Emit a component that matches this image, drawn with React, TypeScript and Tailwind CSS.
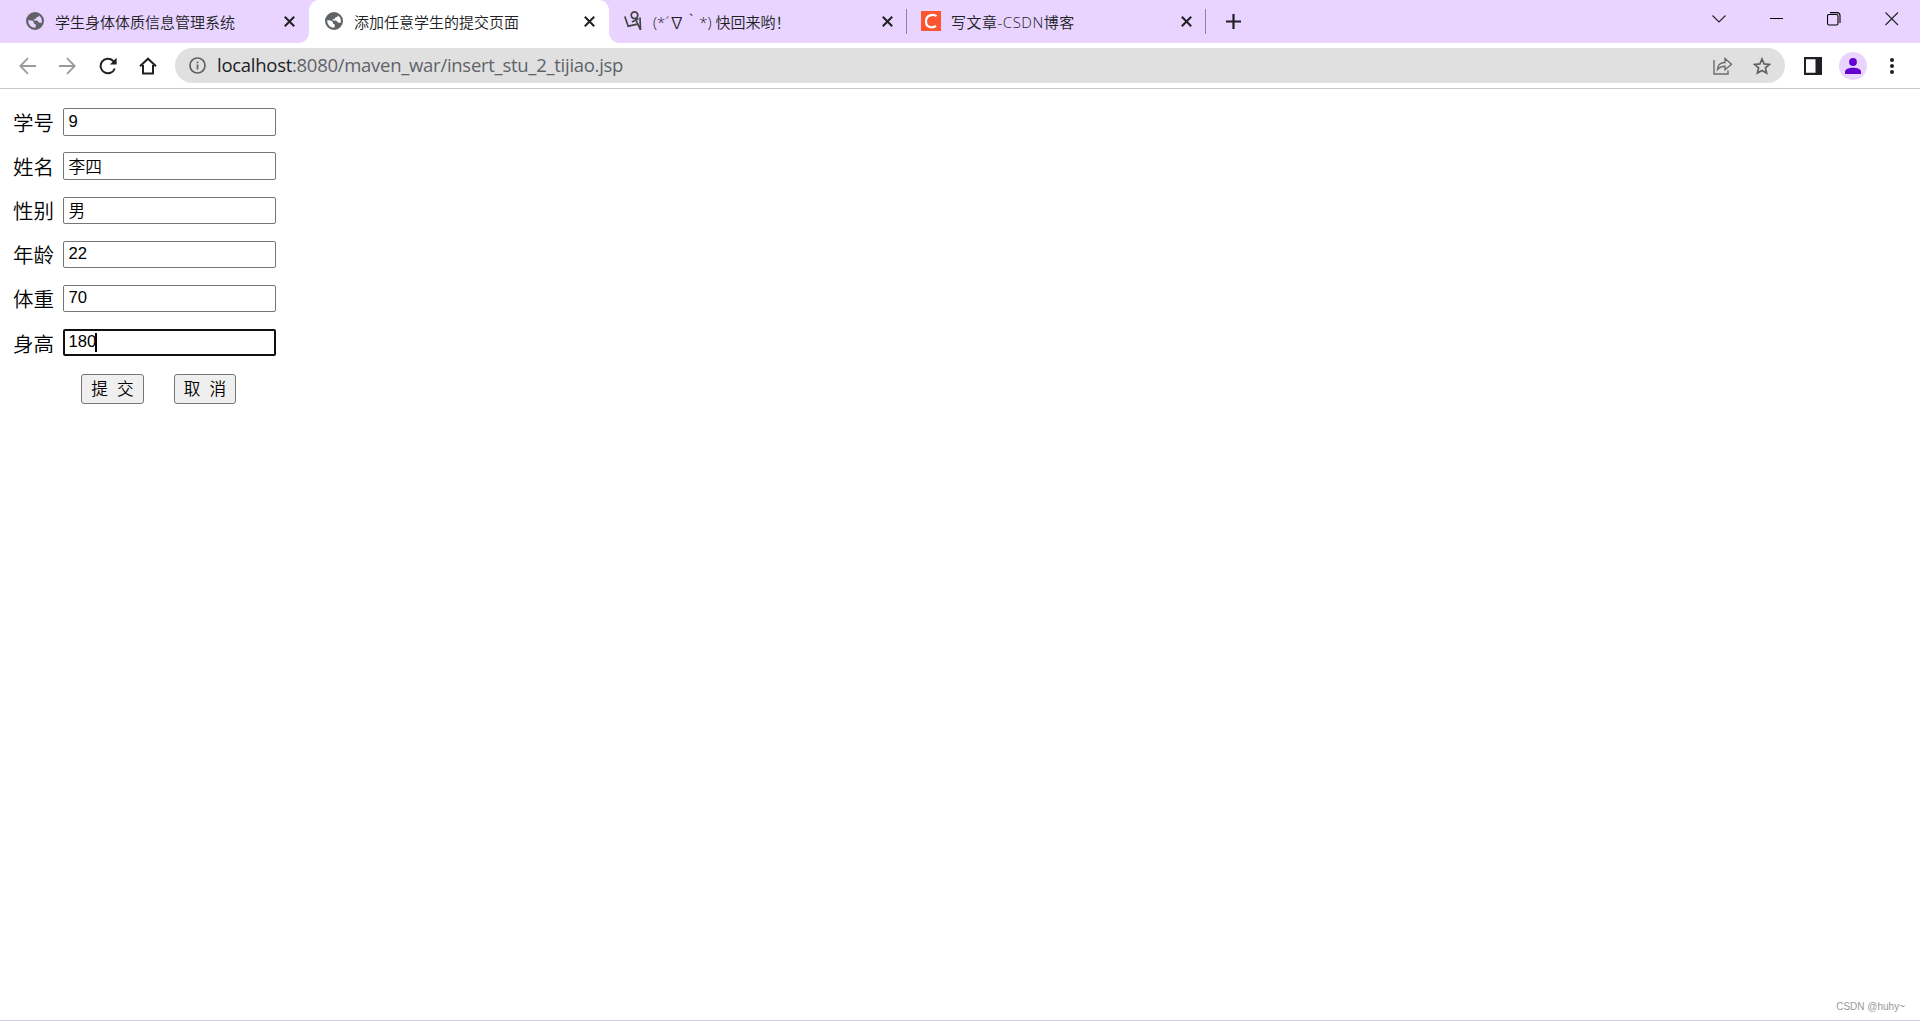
import React from 'react'
import clsx from 'clsx';

const tabs = [
  { title: "学生身体体质信息管理系统", icon: "globe", active: false, divider: false, width: "w-[299px]", text: "" },
  { title: "添加任意学生的提交页面", icon: "globe", active: true, divider: false, width: "w-[300px]", text: "" },
  { title: "(*´∇｀*) 快回来哟！", icon: "doodle", active: false, divider: true, width: "w-[298px]", text: "-ml-px" },
  { title: "写文章-CSDN博客", icon: "csdn", active: false, divider: true, width: "w-[299px]", text: "-ml-px tracking-[0.5px]" },
];

const fields = [
  { label: "学号", value: "9", cjk: false, row: "h-11", box: "h-7" },
  { label: "姓名", value: "李四", cjk: true, row: "h-[45px]", box: "h-7" },
  { label: "性别", value: "男", cjk: true, row: "h-11", box: "h-[27px]", raised: true },
  { label: "年龄", value: "22", cjk: false, row: "h-11", box: "h-[27px]", raised: true },
  { label: "体重", value: "70", cjk: false, row: "h-11", box: "h-[27px]", raised: true },
  { label: "身高", value: "180", cjk: false, row: "h-[45px]", box: "h-[27px]", focused: true },
];

const GlobeIcon = () => (
  <svg width="18" height="18" viewBox="0 0 18 18">
    <path
      fill="#5f6368"
      fillRule="evenodd"
      d="M9 0a9 9 0 1 0 0 18A9 9 0 0 0 9 0ZM8 2.200C10.500 2 12 2.600 13 3.500c.2 1.300-1.400 1.200-2.300 1.700-.9.500-.5 1.400-1.500 1.900-.8.4-1.700.2-1.800 1 .4.700 1.800.4 3 .5 1.700.1 1.600 2.100 3.300 2.200h2.100c.5-3.500-.7-6-2.800-7.300C11.500 2.300 10 2.100 8 2.200ZM2.200 8.300c2 0 4.800.1 5.400 1.500.5 1.200-.1 1.800 1.400 2.300 1 .3 1 1.600.4 3.700A6.900 6.900 0 0 1 2.200 8.300Z"
    />
  </svg>
);

const DoodleIcon = () => (
  <svg width="18" height="20" viewBox="0 0 18 20" fill="none" stroke="#444" strokeWidth="1.700">
    <path d="M.8 5.500 4.200 15.200 13.500 13.200M8 11 14.500 7.500M11.500 8 16.500 19M16 6.500l.5 12.500" />
    <circle cx="10.500" cy="4.200" r="3.300" />
  </svg>
);

const CsdnIcon = () => (
  <svg width="20" height="20" viewBox="0 0 20 20" fill="none">
    <path d="M0 0h20v20H0Z" fill="#fc5531" />
    <path d="M15.500 5.200C12.500 2.800 5 3.600 5 10.500c0 6.300 6.500 6.800 10 4.500" stroke="#fff" strokeWidth="2.200" />
  </svg>
);

const CloseIcon = () => (
  <svg width="11" height="11" viewBox="0 0 11 11" stroke="#1f2023" strokeWidth="2">
    <path d="m.8.8 9.400 9.400M10.200.8.8 10.200" />
  </svg>
);

const TabIcon: React.FC<{ name: string }> = ({ name }) => {
  if (name === "globe") return <GlobeIcon />;
  if (name === "doodle") return <DoodleIcon />;
  return <CsdnIcon />;
};

const TabStrip = () => (
  <div className="relative flex h-[43px] shrink-0 bg-[#e8d4ff] pl-2.5">
    {tabs.map((tab) => (
      <div
        key={tab.title}
        className={clsx(
          'relative flex h-full shrink-0 items-center pb-[1px]',
          tab.width,
          tab.active && 'z-10 rounded-t-[10px] bg-white before:absolute before:bottom-0 before:-left-2.5 before:size-2.5 before:bg-[radial-gradient(circle_at_0_0,transparent_9.5px,white_10px)] after:absolute after:bottom-0 after:-right-2.5 after:size-2.5 after:bg-[radial-gradient(circle_at_100%_0,transparent_9.5px,white_10px)]'
        )}
      >
        <span className={clsx('ml-3.5 flex w-5', tab.icon === "globe" ? 'justify-end' : 'justify-center')}>
          <TabIcon name={tab.icon} />
        </span>
        <span className="ml-[11px] flex-1 pt-0.5 text-[15px] whitespace-nowrap text-[#202124]">
          <span className={tab.text}>{tab.title}</span>
        </span>
        <span className="mr-3.5"><CloseIcon /></span>
        {tab.divider && <span className="absolute top-[9px] right-0 h-[25px] w-px bg-[#8f8399]" />}
      </div>
    ))}
    <svg className="mt-3.5 ml-5" width="15" height="15" viewBox="0 0 15 15" stroke="#1f2023" strokeWidth="2.200">
      <path d="M7.500 0v15M0 7.500h15" />
    </svg>
    <div className="mt-3 ml-auto flex pr-[21px]">
      <svg width="14" height="14" viewBox="0 0 14 14" fill="none" stroke="#222" strokeWidth="1.100"><path d="m.5 3.500 6.500 6.500 6.500-6.500" /></svg>
      <svg className="ml-11" width="14" height="14" viewBox="0 0 14 14" stroke="#000"><path d="M0 6.500h13" /></svg>
      <svg className="ml-[43px]" width="14" height="14" viewBox="0 0 14 14" fill="none" stroke="#000" strokeWidth="1.100"><rect x=".5" y="2.500" width="10.500" height="10.500" rx="1.500" /><path d="M3 .6h7a3 3 0 0 1 3 3V11" /></svg>
      <svg className="ml-11" width="14" height="14" viewBox="0 0 14 14" stroke="#222" strokeWidth="1.100"><path d="m.5.5 12.500 12.500M13 .5.5 13" /></svg>
    </div>
  </div>
);

const Toolbar = () => (
  <div className="flex h-[46px] shrink-0 items-center border-b border-[#c8c8c8]">
    <svg className="ml-[19px]" width="17" height="18" viewBox="0 0 17 18" fill="none" stroke="#9a9a9a" strokeWidth="1.800"><path d="M17 9H1.500M9 1.200 1.300 9 9 16.800" /></svg>
    <svg className="ml-[23px]" width="17" height="18" viewBox="0 0 17 18" fill="none" stroke="#9a9a9a" strokeWidth="1.800"><path d="M0 9h15.500M8 1.200 15.700 9 8 16.800" /></svg>
    <svg className="ml-[23px]" width="18" height="18" viewBox="0 0 18 18" fill="none" stroke="#1f2023" strokeWidth="2"><path d="M15.800 11.500A7.300 7.300 0 1 1 14 3.700l1.500 1.500" /><path d="M17.600.8v6.700h-6.700Z" fill="#1f2023" stroke="none" /></svg>
    <svg className="ml-[22px]" width="18" height="18" viewBox="0 0 18 18" fill="none" stroke="#1f2023" strokeWidth="2"><path d="M1 9.200 9 1.700l8 7.500M4 8v8.500h10V8" /></svg>
    <div className="ml-[18px] flex h-[35px] w-[1610px] items-center rounded-full bg-[#e0e0e0] pr-3.5 pl-3.5">
      <svg width="17" height="17" viewBox="0 0 17 17" fill="none" stroke="#5f6368" strokeWidth="1.700"><circle cx="8.500" cy="8.500" r="7.500" /><path d="M8.500 7.500v5M8.500 4.500v1.700" /></svg>
      <span className="ml-[11px] pb-0.5 font-['Open_Sans',sans-serif] text-[18.5px] font-normal tracking-[-0.28px] whitespace-nowrap text-[#5f6368]">
        <span className="text-[#202124]">localhost</span>:8080/maven_war/insert_stu_2_tijiao.jsp
      </span>
      <svg className="ml-auto" width="20" height="18" viewBox="0 0 20 18" fill="none" stroke="#6b6b6b" strokeWidth="1.400"><path d="M1 3v14h14v-3.500" /><path d="M4.500 12.500c.3-4.500 3-7 7.500-7V1.500l6.500 5.700-6.500 5.600V9.200c-3.500 0-5.500 1-7.500 3.300Z" /></svg>
      <svg className="ml-5" width="18" height="18" viewBox="0 0 18 18" fill="none" stroke="#5f6368" strokeWidth="1.700"><path d="m9 2 2.100 4.900 5.300.5-4 3.500 1.200 5.200L9 13.400l-4.600 2.700 1.200-5.200-4-3.500 5.300-.5Z" /></svg>
    </div>
    <svg className="ml-[19px]" width="18" height="18" viewBox="0 0 18 18" fill="#1f2023"><path d="M0 0h18v18H0ZM2 2.200v13.600h9.500V2.200Z" fillRule="evenodd" /></svg>
    <span className="ml-[17px] flex size-7 items-center justify-center rounded-full bg-[#e8d4ff]">
      <svg width="16" height="16" viewBox="0 0 16 16" fill="#6200d0"><circle cx="8" cy="4" r="3.900" /><path d="M0 16v-2.400C0 8.500 16 8.500 16 13.600V16Z" /></svg>
    </span>
    <svg className="ml-[23px]" width="4" height="16" viewBox="0 0 4 16" fill="#1f2023"><circle cx="2" cy="2" r="2" /><circle cx="2" cy="8" r="2" /><circle cx="2" cy="14" r="2" /></svg>
  </div>
);

const StudentForm = () => (
  <form className="flex-1 pt-[19px] pl-[13px] text-black">
    {fields.map((field) => (
      <div key={field.label} className={clsx('flex items-start', field.row)}>
        <label className={clsx('mr-2.5 w-10 text-[20.5px] whitespace-nowrap', field.raised ? 'leading-[29px]' : 'leading-[31px]')}>{field.label}</label>
        <div
          className={clsx(
            "flex w-[213px] items-center rounded-[2px] font-['Liberation_Sans','Noto_Sans_CJK_SC',sans-serif] text-[16.67px] leading-none",
            field.box,
            field.focused ? 'border-2 border-[#101010] pl-[3.5px]' : 'border border-[#767676] pl-[4.5px]',
            field.cjk && 'pt-1'
          )}
        >
          {field.value}
          {field.focused && <span className="-ml-px h-[19px] w-0.5 bg-black" />}
        </div>
      </div>
    ))}
    <div className="flex pl-[68px] font-['Liberation_Sans','Noto_Sans_CJK_SC',sans-serif] text-[16.67px]">
      <button type="button" className="h-[30px] w-[63px] rounded-[3px] border border-[#767676] bg-[#efefef] whitespace-pre">提  交</button>
      <button type="button" className="ml-[30px] h-[30px] w-[62px] rounded-[3px] border border-[#767676] bg-[#efefef] whitespace-pre">取  消</button>
    </div>
  </form>
);

const App: React.FC = () => (
  <div className="flex h-[1021px] w-[1920px] flex-col overflow-hidden border-b border-[#d0cde0] bg-white font-['Open_Sans','Noto_Sans_CJK_SC',sans-serif] font-[350]">
    <TabStrip />
    <Toolbar />
    <StudentForm />
    <p className="mr-[15px] mb-[7px] text-right font-['Liberation_Sans',sans-serif] text-[10px] leading-3 text-[#999]">CSDN @huhy~</p>
  </div>
);

export default App;
